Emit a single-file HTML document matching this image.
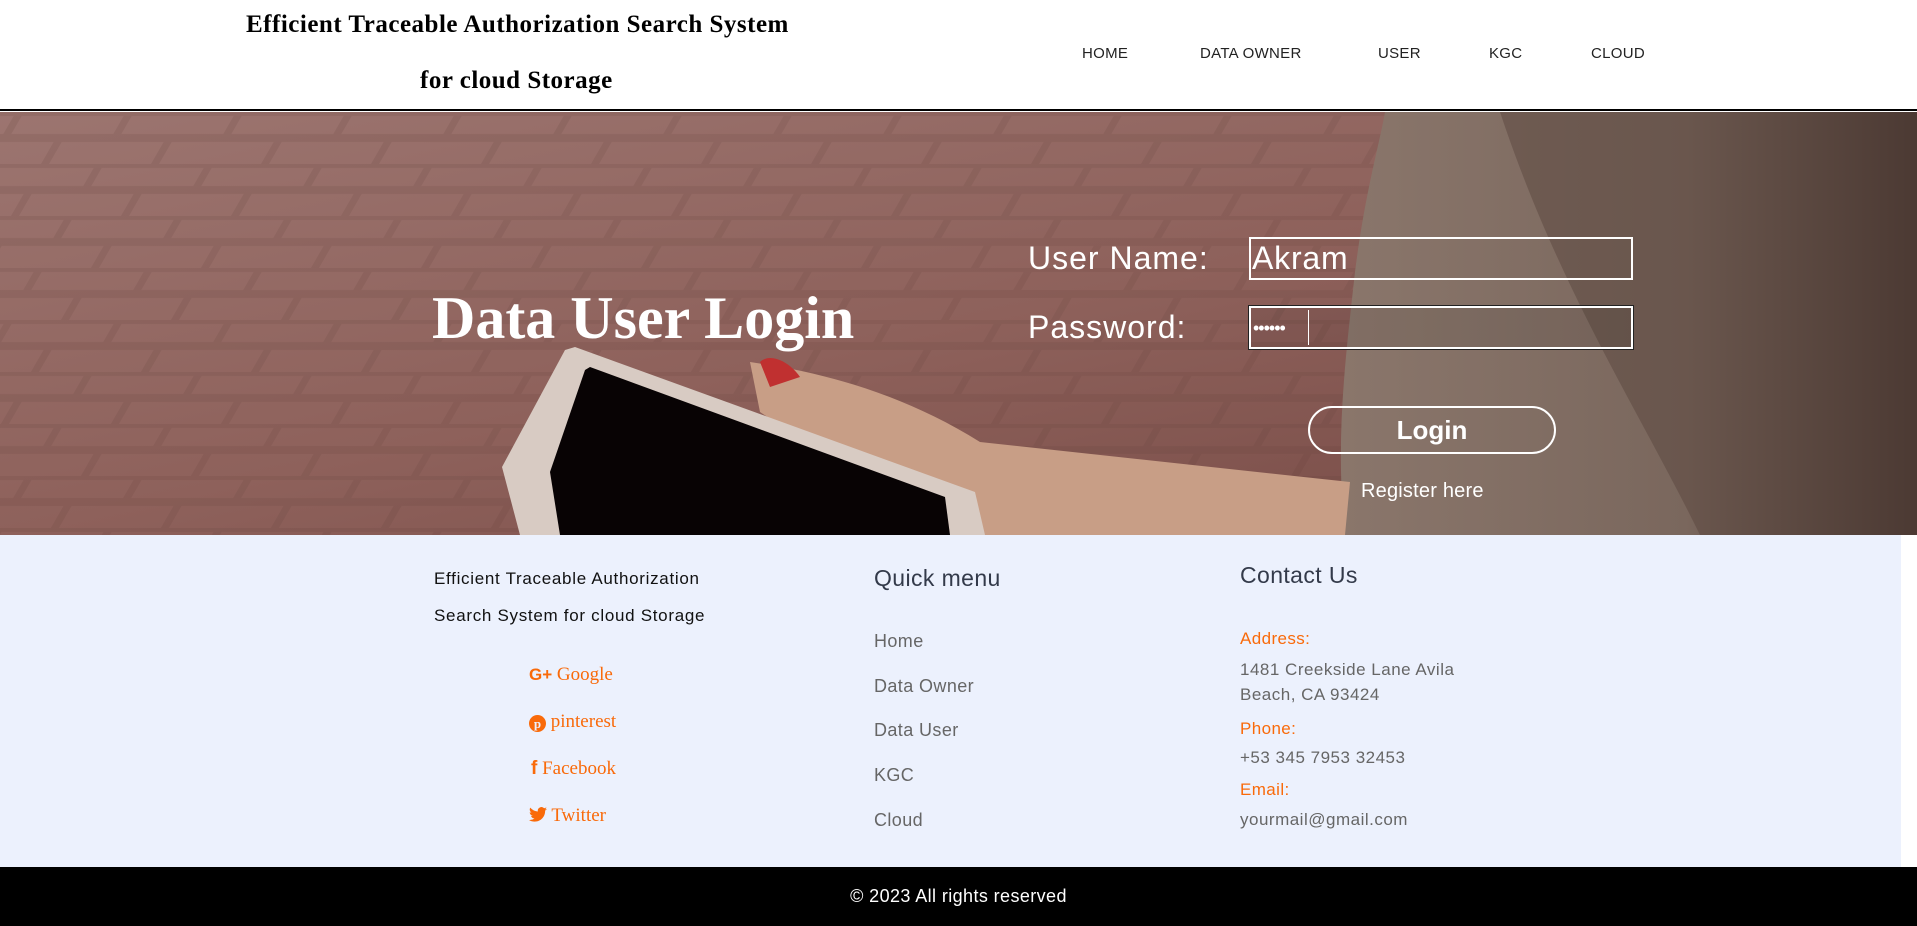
<!DOCTYPE html>
<html><head><meta charset="utf-8"><style>
*{margin:0;padding:0;box-sizing:border-box}
body{width:1917px;height:926px;overflow:hidden;background:#fff;font-family:"Liberation Sans",sans-serif;position:relative}
.a{position:absolute;white-space:nowrap}
.hdr{top:0;left:0;width:1917px;height:111px;background:#fff;border-bottom:2px solid #000}
.t{font-family:"Liberation Serif",serif;font-weight:bold;font-size:25px;color:#000;letter-spacing:.5px}
.nav{font-size:15px;font-weight:500;color:#222;top:45px;letter-spacing:.3px}
.hero{top:112px;left:0;width:1917px;height:423px;overflow:hidden}
.lbl{color:#fff;font-size:32px;letter-spacing:1px}
.in{border:2px solid #fff;width:384px;height:43px}
.foot{top:535px;left:0;width:1901px;height:332px;background:#ecf1fd}
.c1{font-size:17px;color:#111;letter-spacing:.7px}
.soc{font-family:"Liberation Serif",serif;font-size:19px;color:#f96a0a}
.qm{font-size:18px;color:#666;letter-spacing:.4px}
.or{font-size:17px;color:#f96a0a;letter-spacing:.4px}
.gr{font-size:17px;color:#666;letter-spacing:.5px}
</style></head><body>
<div class="a hdr"></div>
<div class="a t" style="left:246px;top:11px">Efficient Traceable Authorization Search System</div>
<div class="a t" style="left:420px;top:67px">for cloud Storage</div>
<div class="a nav" style="left:1082px">HOME</div>
<div class="a nav" style="left:1200px">DATA OWNER</div>
<div class="a nav" style="left:1378px">USER</div>
<div class="a nav" style="left:1489px">KGC</div>
<div class="a nav" style="left:1591px">CLOUD</div>

<div class="a hero">
<svg width="1917" height="423" style="position:absolute;left:0;top:0">
<defs>
<linearGradient id="b" x1="0" y1="0" x2="1" y2="1"><stop offset="0" stop-color="#9c7570"/><stop offset="0.5" stop-color="#8e615b"/><stop offset="1" stop-color="#744843"/></linearGradient>
<linearGradient id="p" x1="0" y1="0" x2="1" y2="0"><stop offset="0" stop-color="#8a766b"/><stop offset="0.6" stop-color="#7a675d"/><stop offset="1" stop-color="#3e2e29"/></linearGradient>
<pattern id="br" width="110" height="52" patternUnits="userSpaceOnUse" patternTransform="skewX(-30)"><path d="M0 0H110M0 26H110M20 0V26M75 26V52" stroke="#5e3a37" stroke-opacity=".15" stroke-width="8"/></pattern>
</defs>
<rect width="1917" height="423" fill="url(#b)"/>
<rect width="1917" height="423" fill="url(#br)"/>
<path d="M1385 0H1917V423H1345C1335 330 1345 250 1355 160C1365 80 1380 30 1385 0Z" fill="url(#p)"/>
<path d="M1500 0H1917V423H1700C1640 300 1560 180 1500 0Z" fill="#5a463e" opacity=".5"/>
<path d="M750 250C820 260 900 280 980 330L1350 370L1345 423H960C900 380 820 340 760 300Z" fill="#c89e86"/>
<path d="M565 238L502 355L520 423H985L975 380L575 235Z" fill="#d8cbc3"/>
<path d="M585 258L550 360L560 423H950L945 385L590 255Z" fill="#080304"/>
<path d="M760 250C770 240 790 250 800 265L770 275Z" fill="#c03030"/>
</svg>
</div>
<div class="a" style="left:432px;top:284px;font-family:'Liberation Serif',serif;font-weight:bold;font-size:60px;color:#fff">Data User Login</div>
<div class="a lbl" style="left:1028px;top:240px">User Name:</div>
<div class="a in" style="left:1249px;top:237px"></div>
<div class="a" style="left:1252px;top:240px;font-size:32px;color:#fff;letter-spacing:.8px">Akram</div>
<div class="a lbl" style="left:1028px;top:309px">Password:</div>
<div class="a in" style="left:1249px;top:306px;outline:1px solid #222;background:rgba(30,20,20,.08)"></div>
<div class="a" style="left:1253px;top:318px;font-size:18px;color:#fff;letter-spacing:-1px">••••••</div>
<div class="a" style="left:1308px;top:310px;width:1px;height:35px;background:#fff"></div>
<div class="a" style="left:1308px;top:406px;width:248px;height:48px;border:2px solid #fff;border-radius:24px;color:#fff;font-weight:bold;font-size:26px;text-align:center;line-height:44px">Login</div>
<div class="a" style="left:1361px;top:480px;font-size:20px;color:#fff;letter-spacing:.2px">Register here</div>

<div class="a foot"></div>
<div class="a c1" style="left:434px;top:569px">Efficient Traceable Authorization</div>
<div class="a c1" style="left:434px;top:606px">Search System for cloud Storage</div>
<div class="a soc" style="left:529px;top:664px"><b style="font-family:'Liberation Sans';font-size:17px">G+</b> Google</div>
<div class="a soc" style="left:529px;top:711px"><span style="display:inline-block;width:17px;height:17px;border-radius:50%;background:#f96a0a;color:#ecf1fd;font-size:13px;text-align:center;line-height:17px;font-weight:bold;vertical-align:-1px">p</span> pinterest</div>
<div class="a soc" style="left:531px;top:758px"><b style="font-family:'Liberation Sans'">f</b> Facebook</div>
<div class="a soc" style="left:529px;top:805px"><svg width="18" height="15" viewBox="0 0 24 20" style="vertical-align:-1px"><path d="M24 2.4a10 10 0 0 1-2.8.8A5 5 0 0 0 23.3.5a10 10 0 0 1-3.1 1.2A4.9 4.9 0 0 0 11.8 6 14 14 0 0 1 1.7.9a4.9 4.9 0 0 0 1.5 6.6 4.9 4.9 0 0 1-2.2-.6 4.9 4.9 0 0 0 3.9 4.9 5 5 0 0 1-2.2.1 4.9 4.9 0 0 0 4.6 3.4A9.9 9.9 0 0 1 0 17.300 14 14 0 0 0 7.5 19.5c9 0 14-7.5 14-14v-.6A10 10 0 0 0 24 2.4z" fill="#f96a0a"/></svg> Twitter</div>
<div class="a" style="left:874px;top:565px;font-size:23px;color:#333a4a;letter-spacing:.4px">Quick menu</div>
<div class="a qm" style="left:874px;top:631px">Home</div>
<div class="a qm" style="left:874px;top:676px">Data Owner</div>
<div class="a qm" style="left:874px;top:720px">Data User</div>
<div class="a qm" style="left:874px;top:765px">KGC</div>
<div class="a qm" style="left:874px;top:810px">Cloud</div>
<div class="a" style="left:1240px;top:562px;font-size:23px;color:#333a4a;letter-spacing:.4px">Contact Us</div>
<div class="a or" style="left:1240px;top:629px">Address:</div>
<div class="a gr" style="left:1240px;top:660px">1481 Creekside Lane Avila</div>
<div class="a gr" style="left:1240px;top:685px">Beach, CA 93424</div>
<div class="a or" style="left:1240px;top:719px">Phone:</div>
<div class="a gr" style="left:1240px;top:748px">+53 345 7953 32453</div>
<div class="a or" style="left:1240px;top:780px">Email:</div>
<div class="a gr" style="left:1240px;top:810px">yourmail@gmail.com</div>
<div class="a" style="left:0;top:867px;width:1917px;height:59px;background:#000;color:#fff;font-size:18px;text-align:center;line-height:58px;letter-spacing:.4px">© 2023 All rights reserved</div>
</body></html>
